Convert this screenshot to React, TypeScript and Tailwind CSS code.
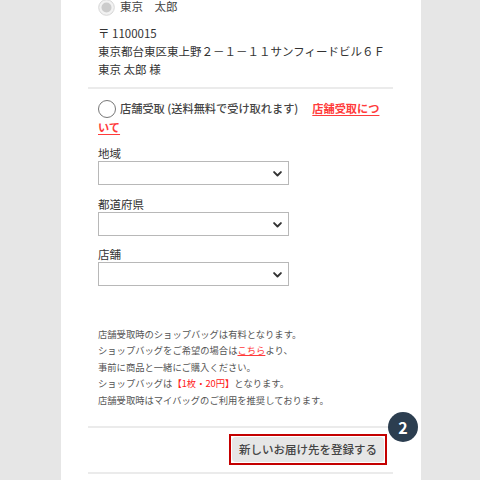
import React from "react";

const F = { fontFamily: '"Noto Sans CJK JP", "Noto Sans", sans-serif' };

function Chevron() {
  return (
    <svg width="9" height="6" viewBox="0 0 9 6" className="absolute right-[6px] top-[9px]">
      <path d="M1.1 1.1 L4.5 4.5 L7.9 1.1" fill="none" stroke="#333" strokeWidth="1.9" strokeLinecap="round" strokeLinejoin="round" />
    </svg>
  );
}

function SelectBox() {
  return (
    <div className="relative w-[191px] h-[24px] border border-[#b8b8b8] bg-white">
      <Chevron />
    </div>
  );
}

export default function App() {
  return (
    <div style={F} className="flex w-[480px] h-[480px] overflow-hidden bg-[#e6e6e6]">
      <div className="w-[61px] shrink-0 bg-[#e6e6e6]" />
      <div className="relative w-[360px] shrink-0 bg-white pl-[27px] pr-[28px]">
        <div className="px-[10px] text-[11.5px] text-[#333]">
          <div className="flex items-center h-[18px] mt-[-2px]">
            <svg width="17" height="17" viewBox="0 0 17 17" className="shrink-0">
              <circle cx="8.5" cy="8.5" r="7.8" fill="#f2f2f2" stroke="#d6d6d6" strokeWidth="1" />
              <circle cx="8.5" cy="8.5" r="5" fill="#cccccc" />
            </svg>
            <span className="ml-[5px] text-[#444]">東京　太郎</span>
          </div>
          <div className="mt-[8px] leading-[18px]">〒 1100015</div>
          <div className="leading-[18px] whitespace-nowrap">東京都台東区東上野２－１－１１サンフィードビル６Ｆ</div>
          <div className="leading-[18px]">東京 太郎 様</div>
        </div>
        <div className="mt-[9px] h-[2px] bg-[#ebebeb]" />
        <div className="px-[10px] text-[11.5px] text-[#333]">
          <p className="mt-[10px] leading-[18px] text-[11.2px]">
            <span className="inline-block align-middle w-[18px] h-[18px] rounded-full border-[1.5px] border-[#777] mr-[4px] -mt-[2px]" />
            <span className="font-medium text-[#444]">店舗受取 (送料無料で受け取れます)</span>
            <a className="ml-[14px] font-bold text-[#ff3b3b] underline underline-offset-2">店舗受取について</a>
          </p>
          <div className="mt-[9px] leading-[16px]">地域</div>
          <SelectBox />
          <div className="mt-[11px] leading-[16px]">都道府県</div>
          <SelectBox />
          <div className="mt-[10px] leading-[16px]">店舗</div>
          <SelectBox />
          <div className="mt-[40px] text-[9.3px] leading-[16.5px] text-[#555]">
            <div>店舗受取時のショップバッグは有料となります。</div>
            <div>
              ショップバッグをご希望の場合は<a className="text-[#ff3b3b] underline">こちら</a>より、
            </div>
            <div>事前に商品と一緒にご購入ください。</div>
            <div>
              ショップバッグは<span className="text-[#ff2020]">【1枚・20円】</span>となります。
            </div>
            <div>店舗受取時はマイバッグのご利用を推奨しております。</div>
          </div>
        </div>
        <div className="mt-[18px] h-[2px] bg-[#ebebeb]" />
        <div className="flex justify-end pr-[6px] mt-[6px]">
          <div className="border-2 border-[#c40000] p-[1px]">
            <div className="h-[25px] px-[7px] flex items-center rounded-[4px] bg-[#e6e6e6] text-[11.5px] text-[#444] font-medium">
              新しいお届け先を登録する
            </div>
          </div>
        </div>
        <div className="mt-[7px] h-[2px] bg-[#ebebeb]" />
        <div className="absolute left-[327px] top-[412px] w-[30px] h-[30px] rounded-full bg-[#2c3e50] flex items-center justify-center text-white text-[16px] font-bold">
          2
        </div>
      </div>
      <div className="flex-1 bg-[#e6e6e6]" />
    </div>
  );
}
